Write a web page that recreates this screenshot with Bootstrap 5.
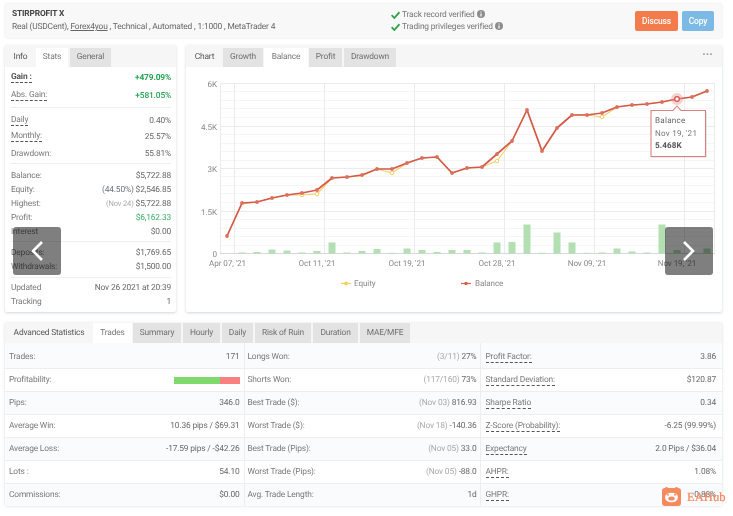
<!DOCTYPE html>
<html lang="en">
<head>
<meta charset="utf-8">
<title>STIRPROFIT X</title>
<link href="https://cdn.jsdelivr.net/npm/bootstrap@5.3.0/dist/css/bootstrap.min.css" rel="stylesheet">
<style>
html,body{margin:0;background:#fff;overflow:hidden}
body{font-family:Roboto,"Liberation Sans",sans-serif;font-size:8.4px;letter-spacing:-.16px;text-rendering:geometricPrecision;line-height:1.2;color:#666}
.shell{width:733px;height:516px;padding:4px 11px 0 5px;position:relative;filter:blur(.35px)}
.panel{background:#fff;border:0;border-radius:2px;box-shadow:0 1px 3px rgba(60,70,90,.22)}
.headbox{height:34px;background:#f8f8f8;box-shadow:0 0 2px rgba(60,70,90,.18);padding:0 8px 0 7px}
.sysname{font-weight:700;color:#444;line-height:13px}
.sysmeta{color:#666;line-height:13px}
.sysmeta a{color:#666}
.verify{width:244px}
.verline{line-height:12px;color:#777;white-space:nowrap}
.tick{width:9px;height:8px;margin-right:2px}
.infodot{width:8px;height:8px;margin-left:2px;vertical-align:-1px}
.actbtn{height:20px;padding:0;border:0;border-radius:2px;color:#fff;font-size:8.4px;letter-spacing:-.1px;font-weight:500;line-height:20px}
.btn-discuss{width:43px;background:#f47b4c;margin-right:4px}
.btn-copy{width:32px;background:#7cb9e5}
.toprow{margin-top:7px;gap:10px}
.leftp{width:171px;height:267px}
.rightp{width:536px;height:267px}
.tabbar{height:22px;background:#f6f6f6;padding-top:3px;flex-wrap:nowrap}
.tabbar .tabi{height:19px;line-height:18px;padding:0;color:#666;text-align:center;white-space:nowrap;display:block;text-decoration:none}
.tabi.off{background:#e3e3e3;color:#6f6f6f}
.tabi.on{background:#fff;color:#777}
.tabi.lab{color:#555}
.statgroup{margin:0 5px 0 6px;border-bottom:1px solid #efefef}
.statgroup:last-child{border-bottom:0}
.statrow{white-space:nowrap;color:#7a7a7a}
.statrow .val{color:#6a6a6a}
.statrow .mute{color:#aaa}
.dash{border-bottom:1px dashed #555;line-height:9px;display:inline-block}
.g1{height:41px;padding-top:2px}.g1 .statrow{height:18px}
.g2{height:56px;padding-top:4.5px}.g2 .statrow{height:16.5px}
.g3{height:78px;padding-top:5px}.g3 .statrow,.g4 .statrow,.g5 .statrow{height:14px}
.g4{height:36px;padding-top:4px}
.g5{height:34px;padding-top:3.5px}
.gain{color:#27a456;font-weight:700}
.profit{color:#3fae68!important}
.strong-lab{font-weight:700;color:#555}
.dots{margin-left:auto;color:#999;font-size:8px;letter-spacing:.6px;margin-right:9px;line-height:14px;font-weight:700}
svg text{font-family:Roboto,"Liberation Sans",sans-serif;font-size:8.1px;letter-spacing:-.08px;fill:#888}
.statsp{margin-top:10px;height:183px;width:717px}
.tabbar2{height:21px;padding-top:1px}
.tabbar2 .tabi{height:20px;line-height:20px}
.stats-table{width:717px;table-layout:fixed;margin:0;color:#777;border-collapse:collapse}
.stats-table td{height:23px;padding:1.5px 4px 0;border:0;border-bottom:1px solid #eee;background:transparent;color:#7a7a7a;vertical-align:middle;font-size:8.4px;white-space:nowrap;box-shadow:none}
.stats-table tr:nth-child(odd) td{background:#f9fbfc}
.stats-table tr:first-child td{height:25px;padding-top:4px}
.stats-table tr:last-child td{border-bottom:0}
.stats-table .lab2{padding-left:3px}
.stats-table .lab3{padding-left:5px}
.stats-table .vcol{text-align:right;color:#6a6a6a;border-right:1px solid #eee;padding-right:4px}
.stats-table .vcol2{padding-right:3px}
.stats-table .lastv{border-right:0;padding-right:6px}
.stats-table .mute{color:#aaa}
.profitbar{height:7px;width:66px;margin-left:auto;border-radius:0;background:#f98080}
.profitbar .progress-bar{background:#7fd96f}
.navarrow{position:absolute;top:227px;width:48px;height:48px;background:rgba(0,0,0,.5);border-radius:3px;display:flex;align-items:center;justify-content:center}
.na-l{left:13px}.na-r{left:665px}
.hubmark{position:absolute;left:662px;top:487px;display:flex;align-items:center;gap:6px}
.hubname{font-family:"Liberation Serif",serif;font-size:12.6px;letter-spacing:0;color:#f4855a;line-height:18px;-webkit-text-stroke:.2px #f4855a}
</style>
</head>
<body>
<div class="shell">

  <div class="panel headbox d-flex align-items-center">
    <div style="width:379px">
      <div class="sysname">STIRPROFIT X</div>
      <div class="sysmeta">Real (USDCent), <a href="#">Forex4you</a> , Technical , Automated , 1:1000 , MetaTrader 4</div>
    </div>
    <div class="verify">
      <div class="verline"><svg class="tick" viewBox="0 0 9 8"><path d="M.6 4.2 3.3 7 8.4 1.2" fill="none" stroke="#2fa04f" stroke-width="1.8"/></svg>Track record verified<svg class="infodot" viewBox="0 0 8 8"><circle cx="4" cy="4" r="4" fill="#8d8d8d"/><path d="M3.4 3.4h1.2v3H3.4zM3.4 1.5h1.2v1.1H3.4z" fill="#fff"/></svg></div>
      <div class="verline"><svg class="tick" viewBox="0 0 9 8"><path d="M.6 4.2 3.3 7 8.4 1.2" fill="none" stroke="#2fa04f" stroke-width="1.8"/></svg>Trading privileges verified<svg class="infodot" viewBox="0 0 8 8"><circle cx="4" cy="4" r="4" fill="#8d8d8d"/><path d="M3.4 3.4h1.2v3H3.4zM3.4 1.5h1.2v1.1H3.4z" fill="#fff"/></svg></div>
    </div>
    <button class="btn actbtn btn-discuss" type="button">Discuss</button>
    <button class="btn actbtn btn-copy" type="button">Copy</button>
  </div>

  <div class="d-flex toprow">
    <div class="panel leftp">
      <div class="nav tabbar">
        <a class="tabi lab" style="width:31px" href="#">Info</a>
        <a class="tabi on" style="width:32px" href="#">Stats</a>
        <a class="tabi off" style="width:41px;margin-left:2px" href="#">General</a>
      </div>
      <div class="statgroup g1">
        <div class="statrow d-flex justify-content-between align-items-center"><span class="dash strong-lab">Gain :</span><span class="gain">+479.09%</span></div>
        <div class="statrow d-flex justify-content-between align-items-center"><span class="dash">Abs. Gain:</span><span class="gain" style="font-weight:500">+581.05%</span></div>
      </div>
      <div class="statgroup g2">
        <div class="statrow d-flex justify-content-between align-items-center"><span class="dash">Daily</span><span class="val">0.40%</span></div>
        <div class="statrow d-flex justify-content-between align-items-center"><span class="dash">Monthly:</span><span class="val">25.57%</span></div>
        <div class="statrow d-flex justify-content-between align-items-center"><span>Drawdown:</span><span class="val">55.81%</span></div>
      </div>
      <div class="statgroup g3">
        <div class="statrow d-flex justify-content-between align-items-center"><span>Balance:</span><span class="val">$5,722.88</span></div>
        <div class="statrow d-flex justify-content-between align-items-center"><span>Equity:</span><span class="val"><span class="text-secondary">(44.50%)</span> $2,546.85</span></div>
        <div class="statrow d-flex justify-content-between align-items-center"><span>Highest:</span><span class="val"><span class="mute" style="font-size:7.6px">(Nov 24)</span> $5,722.88</span></div>
        <div class="statrow d-flex justify-content-between align-items-center"><span>Profit:</span><span class="val profit">$6,162.33</span></div>
        <div class="statrow d-flex justify-content-between align-items-center"><span>Interest</span><span class="val">$0.00</span></div>
      </div>
      <div class="statgroup g4">
        <div class="statrow d-flex justify-content-between align-items-center"><span>Deposits:</span><span class="val">$1,769.65</span></div>
        <div class="statrow d-flex justify-content-between align-items-center"><span>Withdrawals:</span><span class="val">$1,500.00</span></div>
      </div>
      <div class="statgroup g5">
        <div class="statrow d-flex justify-content-between align-items-center"><span>Updated</span><span class="val">Nov 26 2021 at 20:39</span></div>
        <div class="statrow d-flex justify-content-between align-items-center"><span>Tracking</span><span class="val">1</span></div>
      </div>
    </div>

    <div class="panel rightp">
      <div class="nav tabbar align-items-start">
        <a class="tabi lab" style="width:37px" href="#">Chart</a>
        <a class="tabi off" style="width:40px" href="#">Growth</a>
        <a class="tabi on" style="width:44px;margin-left:1px" href="#">Balance</a>
        <a class="tabi off" style="width:33px;margin-left:1px" href="#">Profit</a>
        <a class="tabi off" style="width:52px;margin-left:2px" href="#">Drawdown</a>
        <span class="dots">•••</span>
      </div>
      <svg class="d-block" width="536" height="245" viewBox="186 67 536 245">
        <g stroke="#f4f5f6" stroke-width="1" fill="none" shape-rendering="crispEdges">
          <path d="M220 91.5H715M220 100H715M220 108.5H715M220 117H715M220 134.5H715M220 143H715M220 151.5H715M220 160H715M220 176.5H715M220 185H715M220 193.5H715M220 202H715M220 219.5H715M220 228H715M220 236.5H715M220 245H715"/>
        </g>
        <g stroke="#e9ebee" stroke-width="1" fill="none" shape-rendering="crispEdges">
          <path d="M220 83.5H715M220 126H715M220 168.5H715M220 211H715"/>
          <path d="M220.5 83V253M234.5 83V253M324.5 83V253M414.5 83V253M504.5 83V253M594.5 83V253M684.5 83V253M714.5 83V253"/>
        </g>
        <path d="M220 253.5H715" stroke="#d5d8dc" stroke-width="1" shape-rendering="crispEdges"/>
        <g fill="#b4dfb2">
          <rect x="238.5" y="252.5" width="7" height="1"/><rect x="253.5" y="252" width="7" height="1.5"/><rect x="268.5" y="249.5" width="7" height="4"/><rect x="283.5" y="250.5" width="7" height="3"/><rect x="298.5" y="252.5" width="7" height="1"/><rect x="313.5" y="251" width="7" height="2.5"/><rect x="328.5" y="242.5" width="7" height="11"/><rect x="343.5" y="252.5" width="7" height="1"/><rect x="358.5" y="251" width="7" height="2.5"/><rect x="373.5" y="249" width="7" height="4.5"/><rect x="388.5" y="252.8" width="7" height="0.7"/><rect x="403.5" y="248.5" width="7" height="5"/><rect x="418.5" y="250" width="7" height="3.5"/><rect x="433.5" y="252" width="7" height="1.5"/><rect x="448.5" y="250" width="7" height="3.5"/><rect x="463.5" y="250" width="7" height="3.5"/><rect x="478.5" y="252.5" width="7" height="1"/><rect x="493.5" y="242.5" width="7" height="11"/><rect x="508.5" y="242" width="7" height="11.5"/><rect x="523.5" y="224.5" width="7" height="29"/><rect x="538.5" y="252.8" width="7" height="0.7"/><rect x="553.5" y="232.5" width="7" height="21"/><rect x="568.5" y="242.5" width="7" height="11"/><rect x="583.5" y="252.8" width="7" height="0.7"/><rect x="598.5" y="252.5" width="7" height="1"/><rect x="613.5" y="248.5" width="7" height="5"/><rect x="628.5" y="251.5" width="7" height="2"/><rect x="643.5" y="252.5" width="7" height="1"/><rect x="658.5" y="224.5" width="7" height="29"/><rect x="673.5" y="250" width="7" height="3.5"/><rect x="688.5" y="252.8" width="7" height="0.7"/><rect x="703.5" y="248.5" width="7" height="5"/>
        </g>
        <polyline fill="none" stroke-linejoin="round" stroke="#f7cf62" stroke-width="1.1" points="227,236 242,204 257,202 272,198 287,195 302,195 317,194 332,178 347,177 362,176 377,169 392,173 407,163 422,158 437,157 452,173 467,168 482,167 497,161 512,141 527,110 542,151 557,128 572,115 587,115 602,117 617,107 632,105 647,104 662,102 677,99 692,97 707,91"/>
        <g fill="#fff" stroke="#f7cf62" stroke-width="1">
          <circle cx="302" cy="195" r="1.8"/><circle cx="317" cy="194" r="1.8"/><circle cx="392" cy="173" r="1.8"/><circle cx="497" cy="161" r="1.8"/><circle cx="602" cy="117" r="1.8"/>
        </g>
        <polyline fill="none" stroke="#d35a4a" stroke-width="1.7" stroke-linejoin="round" points="227,236 242,203 257,202 272,198 287,195 302,193 317,190 332,178 347,177 362,175 377,169 392,169 407,163 422,158 437,157 452,173 467,168 482,167 497,154 512,141 527,110 542,151 557,128 572,115 587,115 602,113 617,107 632,105 647,104 662,102 677,99 692,97 707,91"/>
        <g fill="#dd6f5e">
          <circle cx="227" cy="236" r="1.9"/><circle cx="242" cy="203" r="1.9"/><circle cx="257" cy="202" r="1.9"/><circle cx="272" cy="198" r="1.9"/><circle cx="287" cy="195" r="1.9"/><circle cx="302" cy="193" r="1.9"/><circle cx="317" cy="190" r="1.9"/><circle cx="332" cy="178" r="1.9"/><circle cx="347" cy="177" r="1.9"/><circle cx="362" cy="175" r="1.9"/><circle cx="377" cy="169" r="1.9"/><circle cx="392" cy="169" r="1.9"/><circle cx="407" cy="163" r="1.9"/><circle cx="422" cy="158" r="1.9"/><circle cx="437" cy="157" r="1.9"/><circle cx="452" cy="173" r="1.9"/><circle cx="467" cy="168" r="1.9"/><circle cx="482" cy="167" r="1.9"/><circle cx="497" cy="154" r="1.9"/><circle cx="512" cy="141" r="1.9"/><circle cx="527" cy="110" r="1.9"/><circle cx="542" cy="151" r="1.9"/><circle cx="557" cy="128" r="1.9"/><circle cx="572" cy="115" r="1.9"/><circle cx="587" cy="115" r="1.9"/><circle cx="602" cy="113" r="1.9"/><circle cx="617" cy="107" r="1.9"/><circle cx="632" cy="105" r="1.9"/><circle cx="647" cy="104" r="1.9"/><circle cx="662" cy="102" r="1.9"/><circle cx="692" cy="97" r="1.9"/><circle cx="707" cy="91" r="1.9"/>
        </g>
        <circle cx="677" cy="99" r="6" fill="#e58b86" fill-opacity=".4"/>
        <circle cx="677" cy="99" r="2.3" fill="#fff" stroke="#d6504e" stroke-width="1.3"/>
        <g text-anchor="end">
          <text x="217" y="87">6K</text><text x="217" y="130">4.5K</text><text x="217" y="172">3K</text><text x="217" y="215">1.5K</text><text x="217" y="257">0</text>
        </g>
        <g text-anchor="middle">
          <text x="227.5" y="266">Apr 07, '21</text><text x="317" y="266">Oct 11, '21</text><text x="407" y="266">Oct 19, '21</text><text x="497" y="266">Oct 28, '21</text><text x="587" y="266">Nov 09, '21</text><text x="677" y="266">Nov 19, '21</text>
        </g>
        <path d="M341 283.5H351" stroke="#f7cf62" stroke-width="1.2"/><circle cx="346" cy="283.5" r="2" fill="#f7cf62"/>
        <text x="354" y="286">Equity</text>
        <path d="M461 283.5H471" stroke="#d6604e" stroke-width="1.2"/><circle cx="466" cy="283.5" r="1.8" fill="#d6604e"/>
        <text x="475" y="286">Balance</text>
        <path d="M651 110.5H673L677 106 681 110.5H705.5V156.5H651Z" fill="#fff" fill-opacity=".95" stroke="#d9807f" stroke-width="1.1"/>
        <path d="M652 157.5H706.5V112" fill="none" stroke="#000" stroke-opacity=".08"/>
        <text x="655" y="123" style="fill:#666;letter-spacing:.25px">Balance</text>
        <text x="655" y="136" style="fill:#777;letter-spacing:.25px">Nov 19, '21</text>
        <text x="655" y="148" font-weight="700" style="fill:#555;letter-spacing:.1px">5.468K</text>
      </svg>
    </div>
  </div>

  <div class="panel statsp">
    <div class="nav tabbar tabbar2">
      <a class="tabi lab" style="width:88px" href="#">Advanced Statistics</a>
      <a class="tabi on" style="width:39px" href="#">Trades</a>
      <a class="tabi off" style="width:48px;margin-left:1px" href="#">Summary</a>
      <a class="tabi off" style="width:37px;margin-left:2px" href="#">Hourly</a>
      <a class="tabi off" style="width:31px;margin-left:2px" href="#">Daily</a>
      <a class="tabi off" style="width:56px;margin-left:2px" href="#">Risk of Ruin</a>
      <a class="tabi off" style="width:45px;margin-left:2px" href="#">Duration</a>
      <a class="tabi off" style="width:50px;margin-left:2px" href="#">MAE/MFE</a>
    </div>
    <table class="table stats-table">
      <colgroup><col style="width:108px"><col style="width:131px"><col style="width:118px"><col style="width:118px"><col style="width:121px"><col style="width:121px"></colgroup>
      <tbody>
        <tr><td>Trades:</td><td class="vcol">171</td><td class="lab2">Longs Won:</td><td class="vcol vcol2"><span class="mute">(3/11)</span> 27%</td><td class="lab3"><span class="dash">Profit Factor:</span></td><td class="vcol lastv">3.86</td></tr>
        <tr><td>Profitability:</td><td class="vcol"><div class="progress profitbar"><div class="progress-bar" style="width:70%"></div></div></td><td class="lab2">Shorts Won:</td><td class="vcol vcol2"><span class="mute">(117/160)</span> 73%</td><td class="lab3"><span class="dash">Standard Deviation:</span></td><td class="vcol lastv">$120.87</td></tr>
        <tr><td>Pips:</td><td class="vcol">346.0</td><td class="lab2">Best Trade ($):</td><td class="vcol vcol2"><span class="mute">(Nov 03)</span> 816.93</td><td class="lab3"><span class="dash">Sharpe Ratio</span></td><td class="vcol lastv">0.34</td></tr>
        <tr><td>Average Win:</td><td class="vcol">10.36 pips / $69.31</td><td class="lab2">Worst Trade ($):</td><td class="vcol vcol2"><span class="mute">(Nov 18)</span> -140.36</td><td class="lab3"><span class="dash">Z-Score (Probability):</span></td><td class="vcol lastv">-6.25 (99.99%)</td></tr>
        <tr><td>Average Loss:</td><td class="vcol">-17.59 pips / -$42.26</td><td class="lab2">Best Trade (Pips):</td><td class="vcol vcol2"><span class="mute">(Nov 05)</span> 33.0</td><td class="lab3"><span class="dash">Expectancy</span></td><td class="vcol lastv">2.0 Pips / $36.04</td></tr>
        <tr><td>Lots :</td><td class="vcol">54.10</td><td class="lab2">Worst Trade (Pips):</td><td class="vcol vcol2"><span class="mute">(Nov 05)</span> -88.0</td><td class="lab3"><span class="dash">AHPR:</span></td><td class="vcol lastv">1.08%</td></tr>
        <tr><td>Commissions:</td><td class="vcol">$0.00</td><td class="lab2">Avg. Trade Length:</td><td class="vcol vcol2">1d</td><td class="lab3"><span class="dash">GHPR:</span></td><td class="vcol lastv">0.88%</td></tr>
      </tbody>
    </table>
  </div>

  <div class="navarrow na-l"><svg width="16" height="22" viewBox="0 0 16 22"><path d="M13 2 4 11l9 9" fill="none" stroke="#fff" stroke-width="2.6"/></svg></div>
  <div class="navarrow na-r"><svg width="16" height="22" viewBox="0 0 16 22"><path d="M3 2l9 9-9 9" fill="none" stroke="#fff" stroke-width="2.6"/></svg></div>

  <div class="hubmark">
    <svg width="19" height="19" viewBox="0 0 19 19"><rect y="1" width="19" height="18" rx="3" fill="#f58a5e"/><circle cx="4.5" cy="1.8" r="1.8" fill="#f58a5e"/><circle cx="14.5" cy="1.8" r="1.8" fill="#f58a5e"/><ellipse cx="9.5" cy="10.5" rx="6.5" ry="4.8" fill="#fff"/><ellipse cx="9.5" cy="11.5" rx="3.2" ry="2" fill="#f58a5e"/><circle cx="6" cy="7.8" r="1" fill="#f58a5e"/><circle cx="13" cy="7.8" r="1" fill="#f58a5e"/></svg>
    <span class="hubname">EAHub</span>
  </div>
</div>
<script src="https://cdn.jsdelivr.net/npm/bootstrap@5.3.0/dist/js/bootstrap.bundle.min.js"></script>
</body>
</html>
